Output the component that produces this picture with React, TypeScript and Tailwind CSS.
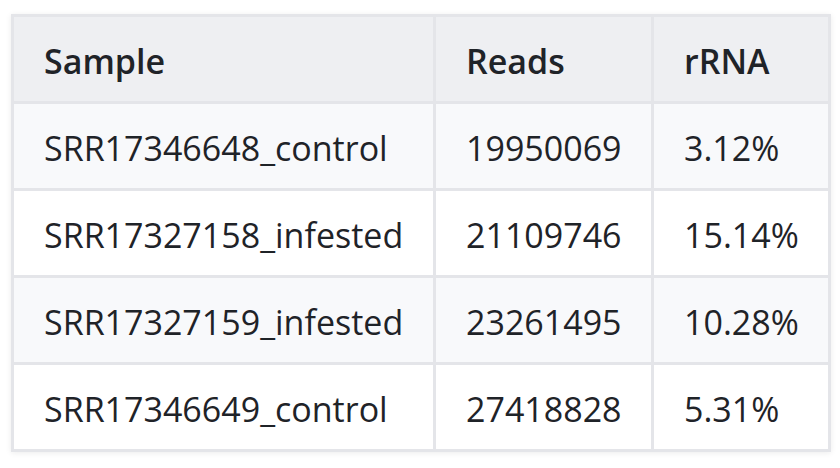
import React from "react";

const rows = [
  ["SRR17346648_control", "19950069", "3.12%"],
  ["SRR17327158_infested", "21109746", "15.14%"],
  ["SRR17327159_infested", "23261495", "10.28%"],
  ["SRR17346649_control", "27418828", "5.31%"],
];

export default function App() {
  return (
    <div
      className="w-[840px] h-[468px] bg-white pl-[11px] pt-[14px]"
      style={{ fontFamily: '"Open Sans", "Noto Sans", sans-serif' }}
    >
      <div className="grid w-[820px] grid-cols-[419px_215px_174px] gap-[3px] bg-[#e4e5e9] p-[3px] shadow-[0_1px_6px_rgba(0,0,0,0.08)] text-[34px] text-[#1f2328]">
        {["Sample", "Reads", "rRNA"].map((h) => (
          <div key={h} className="h-[84px] flex items-center px-[30px] pt-[4px] bg-[#eeeff2] font-semibold">
            {h}
          </div>
        ))}
        {rows.map((r, i) =>
          r.map((c, j) => (
            <div
              key={i + "-" + j}
              className={
                "h-[84px] flex items-center px-[30px] pt-[4px] " +
                (i % 2 === 0 ? "bg-[#f8f9fb]" : "bg-white")
              }
            >
              {c}
            </div>
          ))
        )}
      </div>
    </div>
  );
}
